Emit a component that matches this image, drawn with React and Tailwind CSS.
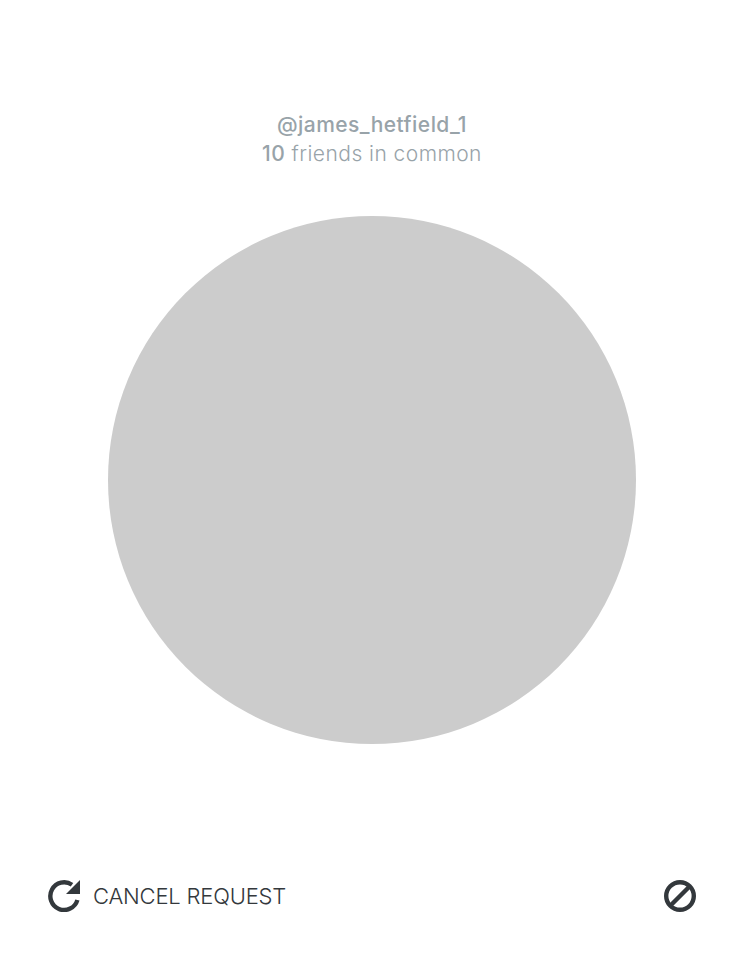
export default function App() {
  return (
    <div className="flex h-[960px] w-[744px] flex-col items-center bg-white font-['Inter',sans-serif]">
      <div className="mt-[110px] text-center text-[21px] leading-[29px] tracking-[0.45px] text-[#98a3a9]">
        <p className="font-[450]">@james_hetfield_1</p>
        <p className="font-light">
          <span className="font-[450]">10</span> friends in common
        </p>
      </div>

      <div className="mt-[48px] h-[528px] w-[528px] rounded-full bg-[#cccccc]" />

      <div className="mt-[136px] flex w-full items-center justify-between px-[48px]">
        <button type="button" className="flex items-center gap-[13px]">
          <svg width="32" height="32" viewBox="0 0 32 32" fill="none" aria-hidden>
            <path
              d="M29.4 20A13.8 13.8 0 1 1 24 4.8"
              stroke="#33383c"
              strokeWidth="4.4"
              fill="none"
            />
            <path d="M32 0V14H18Z" fill="#33383c" />
          </svg>
          <span className="text-[22px] font-light leading-none tracking-[-0.2px] text-[#33383c]">CANCEL REQUEST</span>
        </button>
        <svg width="32" height="32" viewBox="0 0 32 32" fill="none" aria-hidden>
          <circle cx="16" cy="16" r="13.8" stroke="#33383c" strokeWidth="4.4" />
          <path d="M6.5 25.5L25.5 6.5" stroke="#33383c" strokeWidth="4.4" />
        </svg>
      </div>
    </div>
  )
}
